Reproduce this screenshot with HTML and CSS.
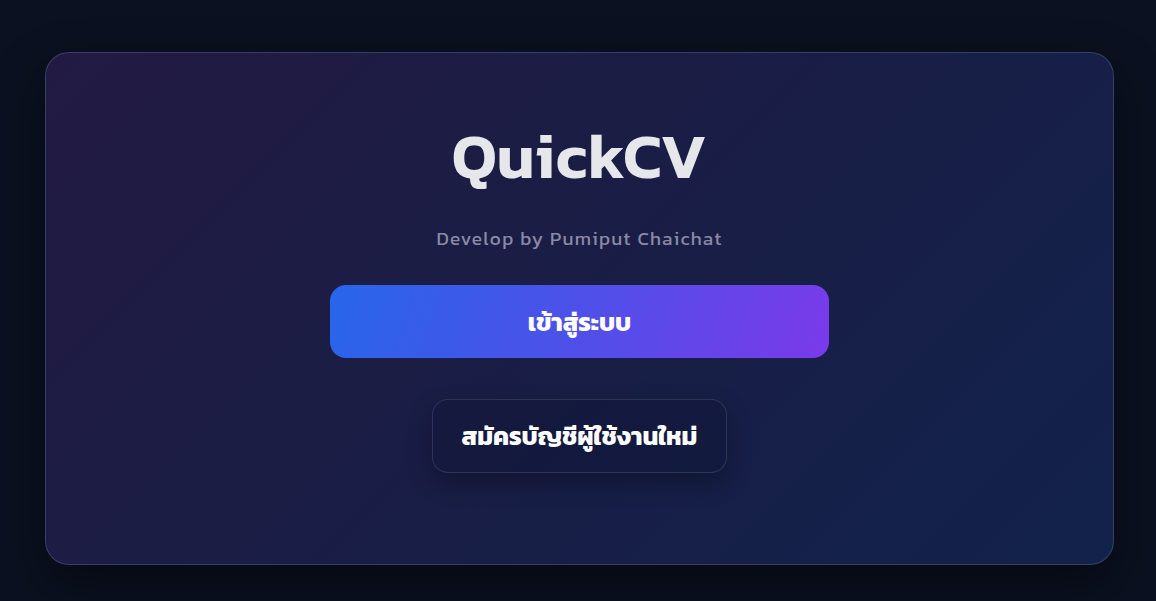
FILE: index.html
```html
<!DOCTYPE html>
<html lang="th">
<head>
<meta charset="utf-8">
<title>QuickCV</title>
<link rel="stylesheet" href="styles.css">
</head>
<body>
<main class="page">
  <section class="card">
    <h1 class="title">QuickCV</h1>
    <p class="subtitle">Develop by Pumiput Chaichat</p>
    <button class="btn btn-primary">เข้าสู่ระบบ</button>
    <button class="btn btn-secondary">สมัครบัญชีผู้ใช้งานใหม่</button>
  </section>
</main>
</body>
</html>
```

FILE: styles.css
```css
* { box-sizing: border-box; }
html, body {
  margin: 0;
  padding: 0;
  height: 100%;
}
body {
  background: #0b1120;
  font-family: "Kanit", "Noto Sans", "Open Sans", sans-serif;
  color: #e5e7eb;
}
.page {
  display: flex;
  justify-content: center;
  padding: 52px 42px 0 45px;
}
.card {
  width: 1070px;
  height: 513px;
  border-radius: 24px;
  border: 1px solid rgba(148, 163, 204, 0.25);
  background: linear-gradient(135deg, #221a42 0%, #1a1d45 45%, #11224b 100%);
  box-shadow: 0 20px 50px rgba(0, 0, 0, 0.45);
  display: flex;
  flex-direction: column;
  align-items: center;
  padding-top: 65px;
}
.title {
  margin: 0;
  font-size: 64px;
  line-height: 76px;
  font-weight: 600;
  color: #e5e7eb;
  letter-spacing: 0.5px;
}
.subtitle {
  margin: 33px 0 0;
  font-size: 19px;
  line-height: 24px;
  letter-spacing: 1.3px;
  color: #8b8aa6;
}
.btn {
  font-family: inherit;
  font-weight: 700;
  font-size: 25px;
  color: #ffffff;
  border-radius: 16px;
  cursor: pointer;
  padding: 0;
}
.btn-primary {
  margin-top: 34px;
  width: 499px;
  height: 73px;
  border: none;
  background: linear-gradient(110deg, #2766ea 0%, #4a52e8 45%, #7b3aeb 100%);
}
.btn-secondary {
  margin-top: 41px;
  width: 295px;
  height: 74px;
  border: 1px solid rgba(148, 163, 204, 0.2);
  background: rgba(16, 21, 54, 0.55);
  box-shadow: 0 10px 25px rgba(0, 0, 0, 0.3);
}
```
